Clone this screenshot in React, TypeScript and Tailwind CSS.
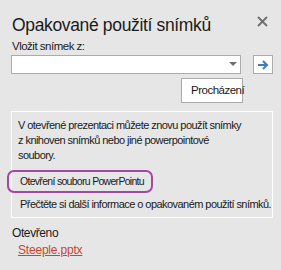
import React from "react";

export default function App() {
  const font = { fontFamily: '"Liberation Sans", Arial, sans-serif' };
  return (
    <div
      className="w-[281px] h-[270px] bg-[#e6e6e6] overflow-hidden text-[#1a1a1a] flex flex-col"
      style={font}
    >
      <div className="flex items-start justify-between pl-[12px] pr-[13px] pt-[14px]">
        <div className="text-[17.5px] leading-[22px] tracking-[-0.35px]">Opakované použití snímků</div>
        <svg width="11" height="11" viewBox="0 0 11 11" className="mt-[2px]">
          <path d="M1 1 L10 10 M10 1 L1 10" stroke="#6f6f6f" strokeWidth="1.8" />
        </svg>
      </div>
      <div className="pl-[12px] mt-[3px] text-[11.5px] leading-[14px] tracking-[-0.5px]">Vložit snímek z:</div>
      <div className="flex items-center pl-[11px] mt-[2px]">
        <div className="w-[230px] h-[19px] bg-white border border-[#ababab] flex items-center justify-end pr-[3px]">
          <svg width="8" height="5" viewBox="0 0 8 5">
            <path d="M0 0 L8 0 L4 4 Z" fill="#6f6f6f" />
          </svg>
        </div>
        <div className="ml-[12px] w-[20px] h-[19px] bg-white border border-[#ababab] flex items-center justify-center">
          <svg width="12" height="10" viewBox="0 0 12 10">
            <path d="M1 5 H10 M6 1 L10 5 L6 9" stroke="#3c7cc0" strokeWidth="2" fill="none" />
          </svg>
        </div>
      </div>
      <div className="flex pl-[181px] mt-[4px]">
        <div className="w-[62px] h-[25px] bg-white border border-[#ababab] flex items-center pl-[9px] text-[11.5px] tracking-[-0.5px] whitespace-nowrap overflow-visible">
          Procházení
        </div>
      </div>
      <div className="ml-[11px] mr-[8px] mt-[8px] border border-white px-[6px] pt-[6px] pb-[5px] text-[11px] leading-[15px] tracking-[-0.55px] whitespace-nowrap">
        <div>
          V otevřené prezentaci můžete znovu použít snímky
          <br />
          z knihoven snímků nebo jiné powerpointové
          <br />
          soubory.
        </div>
        <div className="relative mt-[7px] h-[23px] flex items-center pl-[2px] text-[10.5px] tracking-[-0.7px]">
          <div className="absolute left-[-11px] top-0 w-[146px] h-[23px] border-2 border-[#a04aa0] rounded-[7px]" />
          <span>Otevření souboru PowerPointu</span>
        </div>
        <div className="mt-[4px] pl-[2px] text-[11px] tracking-[-0.55px]">Přečtěte si další informace o opakovaném použití snímků.</div>
      </div>
      <div className="pl-[12px] mt-[8px] text-[12px] leading-[15px] tracking-[-0.4px]">Otevřeno</div>
      <div className="pl-[18px] mt-[2px] text-[12px] leading-[15px] tracking-[-0.2px]">
        <span className="text-[#c8462b] underline">Steeple.pptx</span>
      </div>
    </div>
  );
}
